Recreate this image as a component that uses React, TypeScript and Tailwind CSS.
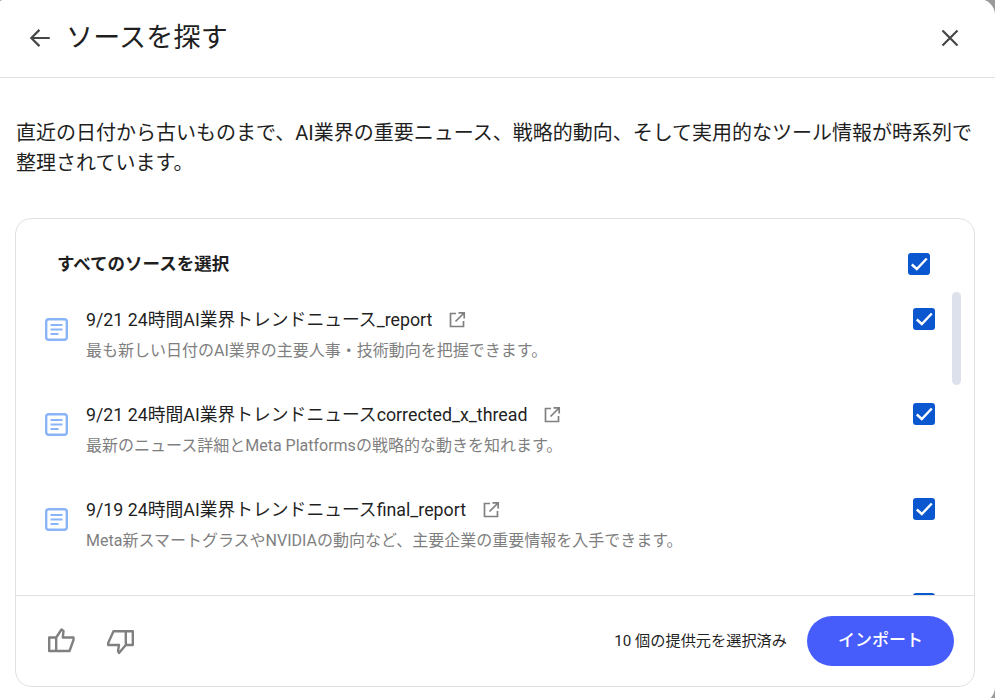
import React from "react";

const font = { fontFamily: "Roboto, 'Noto Sans CJK JP', sans-serif" };

const rows = [
  { title: "9/21 24時間AI業界トレンドニュース_report", desc: "最も新しい日付のAI業界の主要人事・技術動向を把握できます。" },
  { title: "9/21 24時間AI業界トレンドニュースcorrected_x_thread", desc: "最新のニュース詳細とMeta Platformsの戦略的な動きを知れます。" },
  { title: "9/19 24時間AI業界トレンドニュースfinal_report", desc: "Meta新スマートグラスやNVIDIAの動向など、主要企業の重要情報を入手できます。" },
];

function Check() {
  return (
    <span className="flex h-[22px] w-[22px] shrink-0 items-center justify-center rounded-[3px] bg-[#0b57d0]">
      <svg width="22" height="22" viewBox="0 0 22 22" fill="none">
        <path d="M3.800 11.500 8.800 16 18.800 5.500" stroke="#fff" strokeWidth="2.400" />
      </svg>
    </span>
  );
}

function DocIcon() {
  return (
    <svg width="23" height="23" viewBox="0 0 23 23" fill="none" className="shrink-0">
      <rect x="1.2" y="1.2" width="20.600" height="20.600" rx="2.500" stroke="#8ab4f8" strokeWidth="2.400" />
      <path d="M5.500 7h12M5.500 11.500h12M5.500 16h8" stroke="#8ab4f8" strokeWidth="2.200" />
    </svg>
  );
}

function ExternalIcon() {
  return (
    <svg width="18" height="18" viewBox="0 0 18 18" fill="none" className="shrink-0">
      <path d="M8 2.500H2.500v13h13V10" stroke="#808080" strokeWidth="1.700" />
      <path d="M10.500 1.800h5.700v5.700M16 2 7.500 10.500" stroke="#808080" strokeWidth="1.700" />
    </svg>
  );
}

export default function App() {
  return (
    <div className="h-[698px] w-[995px] overflow-hidden bg-[#9a9a9a]" style={font}>
      <div className="-ml-[8px] -mt-[1px] flex h-[704px] w-[1003px] flex-col rounded-[16px] bg-white">
        <header className="flex h-[79px] shrink-0 items-center border-b border-[#e0e0e0] pl-[35px] pr-[33px]">
          <svg width="26" height="26" viewBox="0 0 24 24" fill="none" className="shrink-0">
            <path d="M21 12H4M11.500 4.500 4 12l7.500 7.500" stroke="#444746" strokeWidth="2" />
          </svg>
          <h1 className="ml-[13px] text-[27px] font-normal tracking-[0.2px] text-[#1f1f1f]">ソースを探す</h1>
          <svg width="24" height="24" viewBox="0 0 24 24" fill="none" className="ml-auto">
            <path d="M4.500 4.500 19.500 19.500M19.500 4.500 4.500 19.500" stroke="#444746" strokeWidth="2.200" />
          </svg>
        </header>

        <p className="mt-[40px] h-[60px] shrink-0 pl-[24px] pr-[20px] text-[20px] leading-[30px] text-[#1f1f1f]">
          直近の日付から古いものまで、AI業界の重要ニュース、戦略的動向、そして実用的なツール情報が時系列で整理されています。
        </p>

        <section className="relative ml-[23px] mt-[40px] flex h-[469px] w-[960px] flex-col overflow-hidden rounded-[16px] border border-[#dfe1e5]">
          <div className="flex h-[71px] shrink-0 items-center pl-[41px] pr-[44px] pt-[19px]">
            <span className="text-[17.500px] font-bold text-[#1f1f1f]">すべてのソースを選択</span>
            <span className="ml-auto"><Check /></span>
          </div>

          <div className="flex h-[305px] shrink-0 flex-col gap-[41px] overflow-hidden pl-[29px] pr-[39px] pt-[17px]">
            {rows.map((r) => (
              <div key={r.title} className="flex h-[54px] shrink-0 items-start">
                <span className="mt-[11px]"><DocIcon /></span>
                <div className="ml-[18px] min-w-0 flex-1">
                  <div className="flex h-[26px] items-center">
                    <span className="text-[17.800px] text-[#1f1f1f]">{r.title}</span>
                    <span className="ml-[16px]"><ExternalIcon /></span>
                  </div>
                  <div className="mt-[8px] text-[16px] leading-[20px] text-[#7f7f7f]">{r.desc}</div>
                </div>
                <span className="mt-[1px]"><Check /></span>
              </div>
            ))}
            <div className="flex h-[54px] shrink-0 items-start justify-end">
              <span className="mt-[1px]"><Check /></span>
            </div>
          </div>

          <div className="absolute right-[13px] top-[73px] h-[93px] w-[9px] rounded-full bg-[#dde1ec]" />

          <footer className="flex flex-1 items-center border-t border-[#e0e0e0] pl-[30px] pr-[20px]">
            <svg width="30" height="30" viewBox="0 0 30 30" fill="none">
              <path d="M3.200 11.500h7V25h-7zM10.200 11.500 15.500 3.500 17.500 5l-.7 6.500H27.500V14L23.500 25H10.200" stroke="#808080" strokeWidth="2.400" strokeLinejoin="round" />
            </svg>
            <svg width="30" height="30" viewBox="0 0 30 30" fill="none" className="ml-[29px]">
              <path d="M27.800 5.200h-7V19h7zM20.800 5.200H8.500L3.200 17v2H14l-1 6 1 2 6.800-8" stroke="#808080" strokeWidth="2.400" strokeLinejoin="round" />
            </svg>
            <span className="ml-auto text-[15.200px] text-[#1f1f1f]">10 個の提供元を選択済み</span>
            <button className="ml-[20px] flex h-[50px] w-[147px] items-center justify-center rounded-full bg-[#465cfb] text-[17px] font-medium text-white">
              インポート
            </button>
          </footer>
        </section>
      </div>
    </div>
  );
}
